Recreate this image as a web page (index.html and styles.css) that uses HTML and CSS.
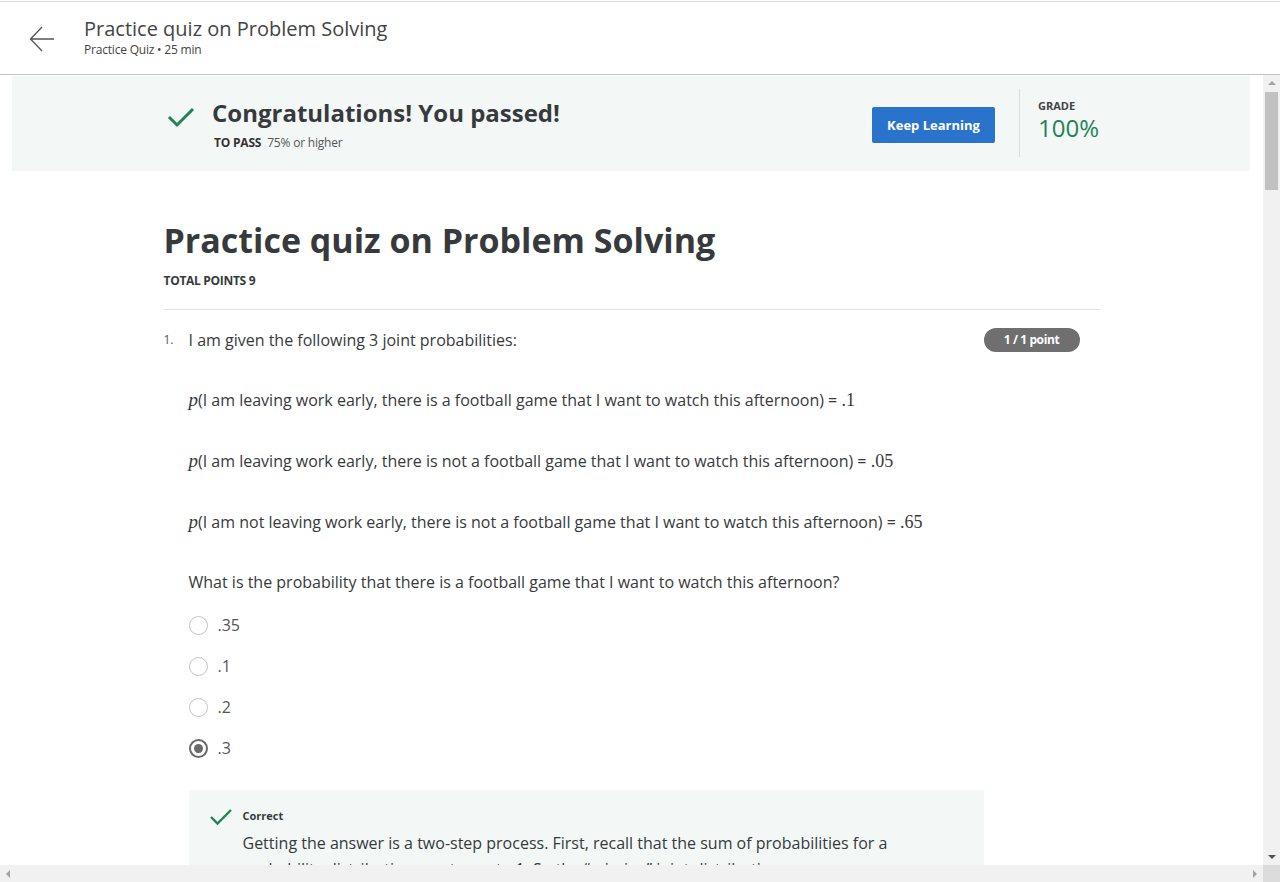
FILE: index.html
```html
<!DOCTYPE html>
<html lang="en">
<head>
<meta charset="utf-8">
<title>Practice quiz on Problem Solving</title>
<link rel="stylesheet" href="styles.css">
</head>
<body>
<header class="topbar">
  <svg class="back" width="26" height="26" viewBox="0 0 26 26"><path d="M25 13H2M13 1L1.5 13 13 25" fill="none" stroke="#555" stroke-width="1.3"/></svg>
  <div class="top-titles">
    <div class="top-title">Practice quiz on Problem Solving</div>
    <div class="top-sub">Practice Quiz • 25 min</div>
  </div>
</header>
<div class="viewport">
  <main class="scroll-area">
    <section class="banner">
      <div class="banner-inner">
        <svg class="pass-check" width="28" height="22" viewBox="0 0 28 22"><path d="M2 11l8 8L26 3" fill="none" stroke="#1f8354" stroke-width="3"/></svg>
        <div class="pass-text">
          <div class="congrats">Congratulations! You passed!</div>
          <div class="to-pass"><b>TO PASS</b> 75% or higher</div>
        </div>
        <button class="keep">Keep Learning</button>
        <div class="grade">
          <div class="grade-label">GRADE</div>
          <div class="grade-value">100%</div>
        </div>
      </div>
    </section>
    <section class="content">
      <h1 class="quiz-title">Practice quiz on Problem Solving</h1>
      <div class="total">TOTAL POINTS 9</div>
      <hr class="rule">
      <div class="question">
        <div class="q-num">1.</div>
        <div class="q-body">
          <div class="q-head">
            <p class="q-text">I am given the following 3 joint probabilities:</p>
            <span class="badge">1 / 1 point</span>
          </div>
          <p class="q-line first"><i class="m">p</i>(I am leaving work early, there is a football game that I want to watch this afternoon) = <span class="mn">.1</span></p>
          <p class="q-line"><i class="m">p</i>(I am leaving work early, there is not a football game that I want to watch this afternoon) = <span class="mn">.05</span></p>
          <p class="q-line"><i class="m">p</i>(I am not leaving work early, there is not a football game that I want to watch this afternoon) = <span class="mn">.65</span></p>
          <p class="q-ask">What is the probability that there is a football game that I want to watch this afternoon?</p>
          <ul class="options">
            <li><span class="radio"></span>.35</li>
            <li><span class="radio"></span>.1</li>
            <li><span class="radio"></span>.2</li>
            <li><span class="radio on"></span>.3</li>
          </ul>
          <div class="feedback">
            <svg class="fb-check" width="24" height="18" viewBox="0 0 24 18"><path d="M2 9l6.5 6.5L22 2" fill="none" stroke="#1f8354" stroke-width="2.4"/></svg>
            <div class="fb-body">
              <div class="fb-title">Correct</div>
              <p class="fb-text">Getting the answer is a two-step process. First, recall that the sum of probabilities for a probability distribution must sum to 1. So the “missing” joint distribution</p>
            </div>
          </div>
        </div>
      </div>
    </section>
  </main>
  <div class="vscroll">
    <span class="arr up"></span>
    <div class="track"><div class="thumb"></div></div>
    <span class="arr down"></span>
  </div>
  <div class="hscroll">
    <span class="arr left"></span>
    <span class="arr right"></span>
  </div>
  <div class="corner"></div>
</div>
</body>
</html>
```
FILE: styles.css
```css
* { box-sizing: border-box; }
html, body { margin: 0; padding: 0; }
body {
  font-family: "Open Sans", "Liberation Sans", sans-serif;
  color: #373a3c;
  background: #fff;
  height: 882px;
  overflow: hidden;
  padding-top: 1px;
}
.topbar {
  height: 74px;
  border-top: 1px solid #dcdcdc;
  border-bottom: 1px solid #c4c4c4;
  display: flex;
  align-items: center;
  padding-left: 29px;
}
.back { margin-top: 1px; }
.top-titles { margin-left: 29px; margin-top: -3px; }
.top-title { font-size: 20px; line-height: 26px; color: #444; }
.top-sub { font-size: 12px; line-height: 16px; color: #444; margin-top: 0; letter-spacing: -0.2px; }

.viewport {
  display: grid;
  grid-template-columns: 1fr 17px;
  grid-template-rows: 790px 17px;
  height: 807px;
}
.scroll-area { overflow: hidden; position: relative; }

.banner {
  margin: 1px 13px 0 12px;
  background: #f3f8f7;
  height: 95px;
}
.banner-inner {
  width: 936px;
  margin: 0 auto;
  height: 100%;
  display: flex;
  align-items: center;
}
.pass-check { margin-left: 4px; margin-top: -14px; }
.pass-text { margin-left: 17px; flex: 1; margin-top: 0; }
.congrats { font-size: 24px; font-weight: 700; line-height: 32px; color: #373a3c; }
.to-pass { font-size: 12px; color: #555; margin-top: 6px; line-height: 16px; padding-left: 2px; letter-spacing: -0.2px; }
.to-pass b { color: #333; margin-right: 3px; }
.keep {
  width: 123px;
  height: 36px;
  background: #2a73cc;
  border: none;
  border-radius: 2px;
  color: #fff;
  font-family: inherit;
  font-size: 13px;
  font-weight: 700;
  margin-top: 2px;
}
.grade {
  margin-left: 24px;
  border-left: 1px solid #dcdcdc;
  height: 68px;
  padding-left: 18px;
  width: 80px;
  margin-top: -2px;
}
.grade-label { font-size: 11px; font-weight: 700; color: #444; margin-top: 10px; line-height: 14px; }
.grade-value { font-size: 24px; color: #1f8354; line-height: 28px; margin-top: 1px; }

.content { width: 936px; margin: 0 auto; }
.quiz-title {
  font-size: 34px;
  font-weight: 700;
  margin: 44px 0 0;
  line-height: 50px;
  color: #373a3c;
}
.total { font-size: 12px; font-weight: 700; margin-top: 8px; line-height: 16px; color: #373a3c; letter-spacing: -0.3px; }
.rule { border: none; border-top: 1px solid #e1e1e1; margin: 20px 0 0; }

.question { display: flex; margin-top: 17px; }
.q-num { width: 25px; font-size: 12px; line-height: 26px; color: #555; }
.q-body { flex: 1; }
.q-head { display: flex; justify-content: space-between; align-items: center; padding-right: 20px; }
.q-text, .q-line, .q-ask, .fb-text {
  font-size: 16px;
  line-height: 26px;
  margin: 0;
  color: #373a3c;
}
.badge {
  background: #6f6f6f;
  color: #fff;
  font-size: 12px;
  font-weight: 700;
  border-radius: 12px;
  height: 24px;
  line-height: 24px;
  width: 96px;
  text-align: center;
  letter-spacing: -0.4px;
}
.q-line { margin-top: 35px; }
.q-line.first { margin-top: 34px; }
.m { font-family: "Liberation Serif", serif; font-size: 19px; font-style: italic; }
.mn { font-family: "Liberation Serif", serif; font-size: 18px; }
.q-ask { margin-top: 34px; }
.options { list-style: none; padding: 0; margin: 13px 0 0; }
.options li {
  display: flex;
  align-items: center;
  height: 41px;
  font-size: 16px;
  color: #555;
  padding-bottom: 7px;
}
.radio {
  width: 19px;
  height: 19px;
  border: 1.5px solid #c4c4c4;
  border-radius: 50%;
  margin-right: 10px;
  display: inline-flex;
  align-items: center;
  justify-content: center;
}
.radio.on { border: 2px solid #6a6a6a; }
.radio.on::after {
  content: "";
  width: 9px;
  height: 9px;
  border-radius: 50%;
  background: #6a6a6a;
}
.feedback {
  width: 795px;
  background: #f3f8f7;
  margin-top: 18px;
  display: flex;
  padding: 17px 40px 10px 20px;
}
.fb-check { margin-top: 1px; flex: none; }
.fb-body { margin-left: 10px; }
.fb-title { font-size: 11px; font-weight: 700; color: #373a3c; line-height: 18px; }
.fb-text { margin-top: 5px; }

.vscroll {
  background: #f1f1f1;
  display: flex;
  flex-direction: column;
  align-items: center;
}
.track { flex: 1; width: 100%; padding: 0 2px; }
.thumb { background: #c1c1c1; height: 98px; margin-top: 0; }
.hscroll {
  background: #f1f1f1;
  display: flex;
  justify-content: space-between;
  align-items: center;
  padding: 0 6px;
}
.corner { background: #dcdcdc; }
.arr { width: 0; height: 0; display: block; }
.arr.up { border-left: 4px solid transparent; border-right: 4px solid transparent; border-bottom: 4px solid #a3a3a3; margin: 6px 0 7px; }
.arr.down { border-left: 4px solid transparent; border-right: 4px solid transparent; border-top: 4px solid #505050; margin: 7px 0 6px; }
.arr.left { border-top: 4px solid transparent; border-bottom: 4px solid transparent; border-right: 4px solid #a3a3a3; }
.arr.right { border-top: 4px solid transparent; border-bottom: 4px solid transparent; border-left: 4px solid #a3a3a3; }
```
